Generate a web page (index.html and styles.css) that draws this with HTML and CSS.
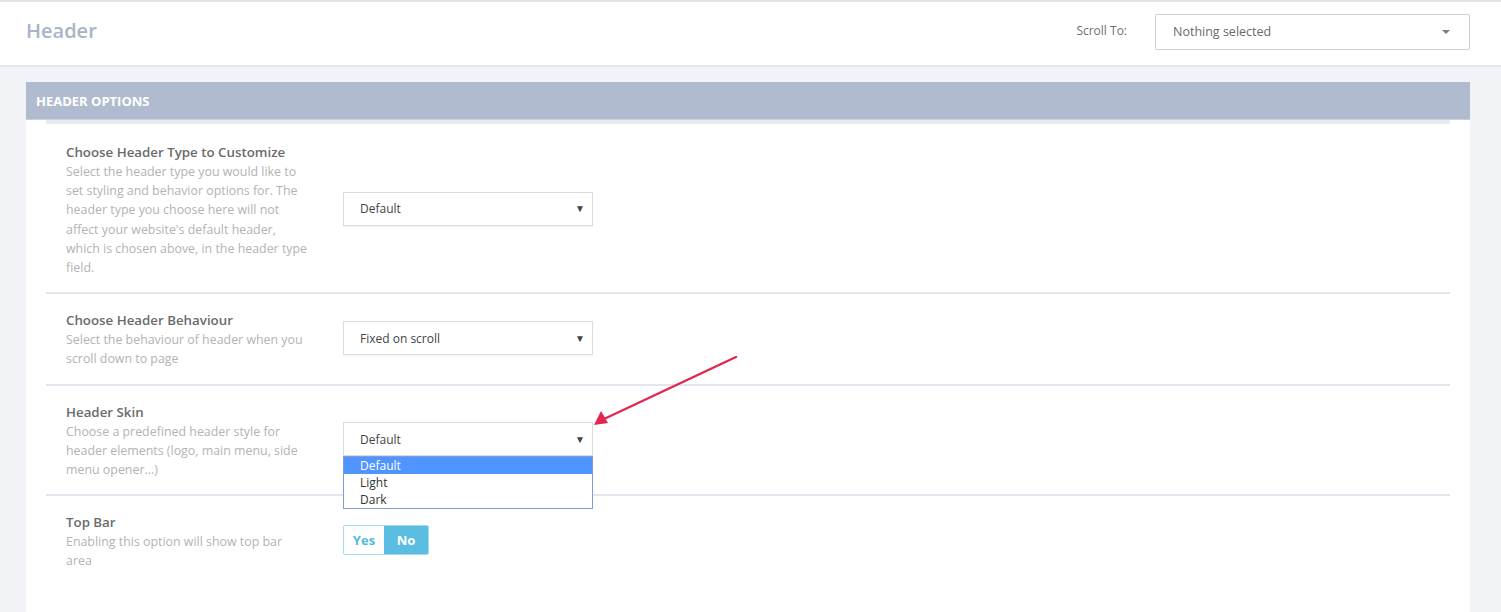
FILE: index.html
```html
<!DOCTYPE html>
<html>
<head>
<meta charset="utf-8">
<title>Header</title>
<link rel="stylesheet" href="styles.css">
</head>
<body>
<header class="topbar">
  <h1 class="page-title">Header</h1>
  <div class="scroll-to">
    <span class="scroll-label">Scroll To:</span>
    <div class="picker">
      <span>Nothing selected</span>
      <span class="picker-caret"></span>
    </div>
  </div>
</header>

<main class="content">
  <section class="panel">
    <div class="panel-title">HEADER OPTIONS</div>
    <div class="panel-body">
      <div class="row">
        <div class="info">
          <div class="label">Choose Header Type to Customize</div>
          <div class="desc">Select the header type you would like to set styling and behavior options for. The header type you choose here will not affect your website's default header, which is chosen above, in the header type field.</div>
        </div>
        <div class="control">
          <div class="select"><span>Default</span><span class="arrow">▼</span></div>
        </div>
      </div>

      <div class="row">
        <div class="info">
          <div class="label">Choose Header Behaviour</div>
          <div class="desc">Select the behaviour of header when you scroll down to page</div>
        </div>
        <div class="control">
          <div class="select"><span>Fixed on scroll</span><span class="arrow">▼</span></div>
        </div>
      </div>

      <div class="row">
        <div class="info">
          <div class="label">Header Skin</div>
          <div class="desc">Choose a predefined header style for header elements (logo, main menu, side menu opener...)</div>
        </div>
        <div class="control">
          <div class="select open"><span>Default</span><span class="arrow">▼</span>
            <ul class="options">
              <li class="active">Default</li>
              <li>Light</li>
              <li>Dark</li>
            </ul>
          </div>
        </div>
      </div>

      <div class="row">
        <div class="info">
          <div class="label">Top Bar</div>
          <div class="desc">Enabling this option will show top bar area</div>
        </div>
        <div class="control">
          <div class="toggle">
            <span class="yes">Yes</span><span class="no">No</span>
          </div>
        </div>
      </div>
    </div>
  </section>
</main>

<svg class="annotation" width="160" height="90" viewBox="0 0 160 90">
  <line x1="150" y1="4" x2="18" y2="66" stroke="#e2264f" stroke-width="2.4" stroke-linecap="round"/>
  <polygon points="8,72 15,58 22,70" fill="#e2264f"/>
</svg>
</body>
</html>
```

FILE: styles.css
```css
* { box-sizing: border-box; }

html, body {
  margin: 0;
  padding: 0;
}

body {
  background: #f1f3f7;
  font-family: "Open Sans", "Noto Sans", "Liberation Sans", sans-serif;
  position: relative;
  min-height: 612px;
}

.topbar {
  height: 67px;
  background: #fff;
  border-top: 2px solid #e4e4e4;
  border-bottom: 2px solid #e2e7ef;
  display: flex;
  align-items: center;
  justify-content: space-between;
  padding: 0 31px 4px 26px;
}

.page-title {
  margin: 0;
  font-size: 20px;
  font-weight: 600;
  color: #aab4c7;
  margin-top: -3px;
}

.scroll-to {
  display: flex;
  align-items: center;
  gap: 28px;
}

.scroll-label {
  font-size: 12px;
  color: #6f6f6f;
  margin-top: -2px;
}

.picker {
  width: 315px;
  height: 36px;
  border: 1px solid #c9cfda;
  border-radius: 2px;
  display: flex;
  align-items: center;
  justify-content: space-between;
  padding: 0 17px 0 17px;
  font-size: 12.5px;
  color: #6a6a6a;
}

.picker-caret {
  width: 0;
  height: 0;
  border-left: 4px solid transparent;
  border-right: 4px solid transparent;
  border-top: 4px solid #7d7d7d;
  margin-right: 2px;
}

.content {
  padding: 15px 31px 0 26px;
}

.panel {
  background: #fff;
  min-height: 540px;
}

.panel-title {
  height: 38px;
  background: #b1bbcf;
  color: #fff;
  font-size: 13px;
  font-weight: 700;
  display: flex;
  align-items: center;
  padding-left: 10px;
  border-bottom: 1px solid #c9d0dd;
}

.panel-body {
  padding: 0 20px;
}

.row {
  display: flex;
  align-items: center;
  border-top: 2px solid #e2e6ef;
  padding: 16px 0 15px 20px;
}

.row:first-child {
  border-top: 4px solid #e6eaf1;
  padding-top: 18px;
}

.info {
  width: 277px;
  padding-right: 35px;
}

.label {
  font-size: 13.3px;
  font-weight: 600;
  color: #6b6b6b;
  line-height: 20px;
}

.desc {
  font-size: 12.4px;
  color: #b3b3b3;
  line-height: 19.2px;
}

.control {
  flex: none;
  margin-top: -2px;
}

.select {
  position: relative;
  width: 250px;
  height: 34px;
  border: 1px solid #dcdcdc;
  box-shadow: 0 1px 1px rgba(0, 0, 0, 0.04);
  display: flex;
  align-items: center;
  justify-content: space-between;
  padding: 0 7px 0 16px;
  font-size: 12px;
  color: #444;
}

.arrow {
  font-size: 10px;
  color: #444;
  margin-top: -1px;
}

.options {
  position: absolute;
  left: -1px;
  right: -1px;
  top: 33px;
  margin: 0;
  padding: 0;
  list-style: none;
  background: #fff;
  border: 1px solid #7f9ddb;
}

.options li {
  height: 17px;
  line-height: 17px;
  padding-left: 16px;
  font-size: 12px;
  color: #333;
}

.options li.active {
  background: #4f94ff;
  color: #fff;
}

.toggle {
  display: flex;
  height: 30px;
  border: 1px solid #9fdcf1;
  border-radius: 2px;
  overflow: hidden;
  font-size: 13px;
  font-weight: 700;
}

.toggle span {
  display: flex;
  align-items: center;
  justify-content: center;
}

.toggle .yes {
  width: 40px;
  color: #55b9df;
  background: #fff;
}

.toggle .no {
  width: 44px;
  color: #fff;
  background: #5bbde2;
}

.annotation {
  position: absolute;
  left: 586px;
  top: 353px;
}
```
